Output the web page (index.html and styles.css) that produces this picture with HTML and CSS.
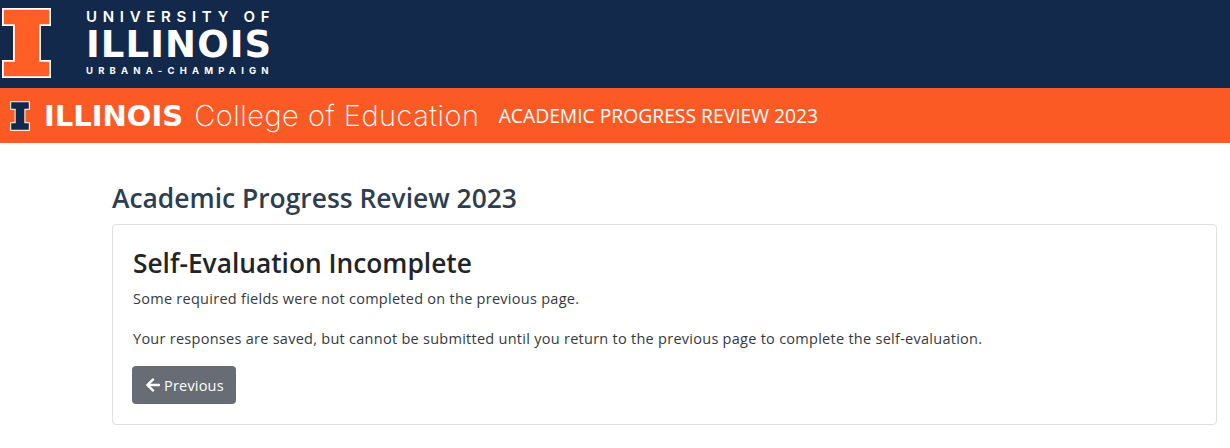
FILE: index.html
```html
<!DOCTYPE html>
<html lang="en">
<head>
<meta charset="utf-8">
<title>Academic Progress Review 2023</title>
<link rel="stylesheet" href="styles.css">
</head>
<body>
<header>
  <div class="top-bar">
    <svg class="block-i" viewBox="0 0 49 70" aria-hidden="true">
      <path class="i-edge" d="M0 0H49V18H39V52H49V70H0V52H11V18H0Z"/>
      <path class="i-fill" d="M1.800 1.800H47.200V16.200H37.200V53.800H47.200V68.200H1.800V53.800H12.800V16.200H1.800Z"/>
    </svg>
    <div class="wordmark">
      <div class="wm-top">UNIVERSITY OF</div>
      <div class="wm-main">ILLINOIS</div>
      <div class="wm-sub">URBANA-CHAMPAIGN</div>
    </div>
  </div>
  <div class="college-bar">
    <svg class="small-i" viewBox="0 0 20 30" aria-hidden="true">
      <path class="s-edge" d="M0 0H20V9H15.500V21H20V30H0V21H4.500V9H0Z"/>
      <path class="s-fill" d="M1.200 1.200H18.800V7.800H14.300V22.200H18.800V28.800H1.200V22.200H5.700V7.800H1.200Z"/>
    </svg>
    <span class="college-strong">ILLINOIS</span>
    <span class="college-name">College of Education</span>
    <span class="app-name">ACADEMIC PROGRESS REVIEW 2023</span>
  </div>
</header>
<main class="content">
  <h1 class="page-title">Academic Progress Review 2023</h1>
  <section class="card">
    <h2 class="card-title">Self-Evaluation Incomplete</h2>
    <p class="first">Some required fields were not completed on the previous page.</p>
    <p class="second">Your responses are saved, but cannot be submitted until you return to the previous page to complete the self-evaluation.</p>
    <a class="btn" href="#">
      <svg class="arrow" viewBox="0 0 448 512" aria-hidden="true"><path d="M257.500 445.100l-22.200 22.200c-9.400 9.400-24.600 9.400-33.900 0L7 273c-9.400-9.400-9.400-24.600 0-33.900L201.400 44.700c9.400-9.400 24.600-9.400 33.900 0l22.200 22.200c9.500 9.500 9.300 25-.4 34.300L136.600 216H424c13.300 0 24 10.700 24 24v32c0 13.300-10.700 24-24 24H136.600l120.500 114.800c9.800 9.300 10 24.800.4 34.300z"/></svg>
      Previous
    </a>
  </section>
</main>
</body>
</html>
```
FILE: styles.css
```css
* { box-sizing: border-box; }
html, body { margin: 0; padding: 0; background: #fff; }
body { font-family: "Open Sans", "Noto Sans", sans-serif; color: #343a40; overflow: hidden; }
.top-bar { height: 88px; background: #13294b; display: flex; align-items: flex-start; }
.block-i { width: 49px; height: 70px; margin: 8px 0 0 2px; flex: none; }
.i-edge { fill: #fff; }
.i-fill { fill: #ff5f24; }
.wordmark { margin-left: 35px; color: #fff; font-family: "DejaVu Sans", sans-serif; display: flex; flex-direction: column; padding-top: 9px; }
.wm-top { font-family: Inter, sans-serif; font-size: 15px; line-height: 15px; font-weight: 600; letter-spacing: 5.700px; white-space: nowrap; }
.wm-main { font-size: 37px; line-height: 30px; font-weight: 700; letter-spacing: 1.100px; margin-top: 6px; white-space: nowrap; }
.wm-sub { font-family: Inter, sans-serif; font-size: 9.500px; line-height: 10px; font-weight: 700; letter-spacing: 5.200px; margin-top: 6px; white-space: nowrap; }
.college-bar { height: 55px; background: #fc5a24; color: #fff; display: flex; align-items: center; padding-left: 10px; white-space: nowrap; }
.small-i { width: 20px; height: 30px; flex: none; }
.s-edge { fill: #fbe3d4; }
.s-fill { fill: #13294b; }
.college-strong { font-family: "DejaVu Sans", sans-serif; font-weight: 700; font-size: 29px; margin-left: 14px; }
.college-name { font-family: Inter, sans-serif; font-weight: 200; font-size: 29px; letter-spacing: 0.500px; margin-left: 11px; }
.app-name { font-size: 19.300px; margin-left: 19px; }
.content { padding: 0 13px 0 112px; }
.page-title { margin: 0; padding-top: 39px; font-size: 26.400px; line-height: 32px; font-weight: 550; color: #2c3e50; }
.card { margin-top: 10px; height: 201px; border: 1px solid #dfdfdf; border-radius: 4px; padding: 21px 20px 0; }
.card-title { margin: 0; font-size: 26.300px; line-height: 34px; font-weight: 550; color: #212529; }
p { margin: 0; font-size: 14.500px; line-height: 21px; letter-spacing: 0.270px; color: #343a40; }
.first { margin-top: 8px; }
.second { margin-top: 19px; }
.btn { display: inline-flex; align-items: center; gap: 4px; margin: 17px 0 0 -1px; height: 38px; width: 104px; padding-left: 14px; border-radius: 4px; background: #676c75; color: #fff; font-size: 14.500px; letter-spacing: 0.200px; text-decoration: none; }
.arrow { width: 14px; height: 16px; fill: #fff; }
```
